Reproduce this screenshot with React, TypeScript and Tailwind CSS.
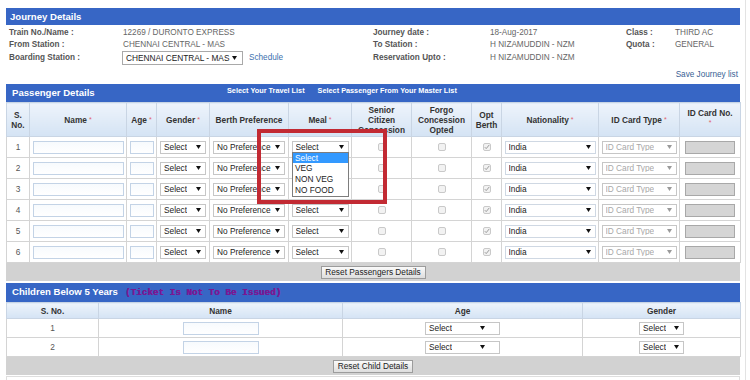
import type { ReactNode } from 'react';

const BLUE = 'bg-[#3766c5]';

function Arrow({ muted }: { muted?: boolean }) {
  return (
    <svg width="5" height="4" viewBox="0 0 5 4" className="shrink-0">
      <path d="M0 0h5L2.5 4z" fill={muted ? '#9a9a9a' : '#111'} />
    </svg>
  );
}

type SelProps = { label: string; className: string; muted?: boolean };

function Sel({ label, className, muted }: SelProps) {
  return (
    <div
      className={`mx-auto flex h-[13px] items-center justify-between border border-[#c6c6c6] bg-white pr-[4px] pl-[3px] text-[8.3px] leading-none ${
        muted ? 'text-[#a8a8a8]' : 'text-[#222]'
      } ${className}`}
    >
      <span className="truncate">{label}</span>
      <Arrow muted={muted} />
    </div>
  );
}

function TextBox({ className }: { className: string }) {
  return (
    <div
      className={`mx-auto h-[13px] border border-[#c3d3e6] bg-linear-to-b from-[#f7fafd] to-white ${className}`}
    />
  );
}

function Check({ checked }: { checked?: boolean }) {
  return (
    <span className="mx-auto flex h-[8px] w-[8px] items-center justify-center rounded-[2px] border border-[#c9c9c9] bg-[#f2f2f2]">
      {checked && (
        <svg width="6" height="6" viewBox="0 0 6 6">
          <path d="M0.8 3.2l1.4 1.4L5.2 1" stroke="#9a9a9a" strokeWidth="1" fill="none" />
        </svg>
      )}
    </span>
  );
}

function Star() {
  return <span className="ml-[2px] align-top text-[7px] font-normal text-[#e0636a]">*</span>;
}

function Th({ children }: { children: ReactNode }) {
  return (
    <th className="border border-[#c9d5e4] bg-linear-to-b from-[#eef4fb] to-[#d4e3f4] px-[1px] text-center align-middle text-[8.3px] leading-[10px] font-bold text-[#333]">
      {children}
    </th>
  );
}

function Td({ children }: { children?: ReactNode }) {
  return <td className="h-[21px] border border-[#d4d4d4] p-0 text-center align-middle">{children}</td>;
}

function ResetButton({ label, className }: { label: string; className: string }) {
  return (
    <div className="flex h-[18px] items-center justify-center bg-[#d2d2d2]">
      <div
        className={`flex h-[13px] items-center justify-center border border-[#9c9c9c] bg-linear-to-b from-[#fafafa] to-[#dedede] text-[8.3px] text-[#222] ${className}`}
      >
        {label}
      </div>
    </div>
  );
}

const passengers = [1, 2, 3, 4, 5, 6];

export default function App() {
  return (
    <div className="relative h-[380px] w-[750px] overflow-hidden bg-white font-['Liberation_Sans',Arial,sans-serif] text-[#555]">
      <div className="ml-[6px] w-[734px] pt-[8px]">
        {/* journey */}
        <div className={`h-[17px] ${BLUE} pl-[4px] text-[9.6px] leading-[17px] font-bold text-white`}>
          Journey Details
        </div>
        <div className="grid grid-cols-[114px_250px_117px_136px_49px_1fr] grid-rows-[12px_12px_14px] items-center pt-[2px] pl-[3px] text-[8.2px]">
          <span className="font-bold text-[#555]">Train No./Name :</span>
          <span className="text-[#666]">12269 / DURONTO EXPRESS</span>
          <span className="font-bold text-[#555]">Journey date :</span>
          <span className="text-[#666]">18-Aug-2017</span>
          <span className="font-bold text-[#555]">Class :</span>
          <span className="text-[#666]">THIRD AC</span>

          <span className="font-bold text-[#555]">From Station :</span>
          <span className="text-[#666]">CHENNAI CENTRAL - MAS</span>
          <span className="font-bold text-[#555]">To Station :</span>
          <span className="text-[#666]">H NIZAMUDDIN - NZM</span>
          <span className="font-bold text-[#555]">Quota :</span>
          <span className="text-[#666]">GENERAL</span>

          <span className="font-bold text-[#555]">Boarding Station :</span>
          <div className="flex items-center">
            <div className="-ml-[1px] flex h-[14px] w-[121px] items-center justify-between border border-[#a9a9a9] bg-white pr-[5px] pl-[3px] text-[8.3px] text-[#222]">
              <span>CHENNAI CENTRAL - MAS</span>
              <Arrow />
            </div>
            <span className="ml-[6px] text-[#3d6fae]">Schedule</span>
          </div>
          <span className="font-bold text-[#555]">Reservation Upto :</span>
          <span className="text-[#666]">H NIZAMUDDIN - NZM</span>
          <span />
          <span />
        </div>
        <div className="mt-[4px] h-[12px] pr-[2px] text-right text-[8.2px] leading-[12px] text-[#3a5f94]">
          Save Journey list
        </div>

        {/* passengers */}
        <div className={`mt-[3px] flex h-[18px] ${BLUE} text-white`}>
          <span className="w-[221px] pl-[6px] text-[9.6px] leading-[18px] font-bold">Passenger Details</span>
          <span className="pt-[2px] text-[7.3px] leading-[9px] font-bold">Select Your Travel List</span>
          <span className="ml-[13px] pt-[2px] text-[7.3px] leading-[9px] font-bold">
            Select Passenger From Your Master List
          </span>
        </div>
        <table className="w-[734px] table-fixed border-collapse">
          <colgroup>
            <col className="w-[23px]" />
            <col className="w-[97px]" />
            <col className="w-[30px]" />
            <col className="w-[53px]" />
            <col className="w-[79px]" />
            <col className="w-[63px]" />
            <col className="w-[60px]" />
            <col className="w-[60px]" />
            <col className="w-[30px]" />
            <col className="w-[97px]" />
            <col className="w-[81px]" />
            <col className="w-[61px]" />
          </colgroup>
          <thead>
            <tr className="h-[34px]">
              <Th>
                S.
                <br />
                No.
              </Th>
              <Th>
                Name<Star />
              </Th>
              <Th>
                Age<Star />
              </Th>
              <Th>
                Gender<Star />
              </Th>
              <Th>Berth Preference</Th>
              <Th>
                Meal<Star />
              </Th>
              <Th>
                Senior
                <br />
                Citizen
                <br />
                Concession
              </Th>
              <Th>
                Forgo
                <br />
                Concession
                <br />
                Opted
              </Th>
              <Th>
                Opt
                <br />
                Berth
              </Th>
              <Th>
                Nationality<Star />
              </Th>
              <Th>
                ID Card Type<Star />
              </Th>
              <th className="border border-[#c9d5e4] bg-linear-to-b from-[#eef4fb] to-[#d4e3f4] pt-[5px] text-center align-top text-[8.3px] leading-[10px] font-bold text-[#333]">
                ID Card No.
                <div className="text-[7px] font-normal text-[#e0636a]">*</div>
              </th>
            </tr>
          </thead>
          <tbody className="text-[8.3px] text-[#555]">
            {passengers.map((n) => (
              <tr key={n}>
                <Td>{n}</Td>
                <Td>
                  <TextBox className="w-[91px]" />
                </Td>
                <Td>
                  <TextBox className="w-[24px]" />
                </Td>
                <Td>
                  <Sel label="Select" className="w-[46px]" />
                </Td>
                <Td>
                  <Sel label="No Preference" className="w-[72px]" />
                </Td>
                <Td>
                  {/* rows 2 and 3 sit under the open list */}
                  {n === 2 || n === 3 ? null : <Sel label="Select" className="w-[57px]" />}
                </Td>
                <Td>
                  <Check />
                </Td>
                <Td>
                  <Check />
                </Td>
                <Td>
                  <Check checked />
                </Td>
                <Td>
                  <Sel label="India" className="w-[91px] border-[#cfd8e3]" />
                </Td>
                <Td>
                  <Sel label="ID Card Type" muted className="w-[75px]" />
                </Td>
                <Td>
                  <div className="mx-auto h-[13px] w-[50px] border border-[#a8a8a8] bg-[#d5d5d5]" />
                </Td>
              </tr>
            ))}
          </tbody>
        </table>
        <ResetButton label="Reset Passengers Details" className="w-[105px]" />

        {/* children */}
        <div className={`mt-[2px] flex h-[19px] items-center ${BLUE} pl-[6px]`}>
          <span className="text-[9.6px] font-bold text-white">Children Below 5 Years</span>
          <span className="ml-[7px] font-['Liberation_Mono','Courier_New',monospace] text-[9.3px] font-bold text-[#7a1893] [text-shadow:0.4px_0_0_#7a1893]">
            (Ticket Is Not To Be Issued)
          </span>
        </div>
        <table className="w-[734px] table-fixed border-collapse">
          <colgroup>
            <col className="w-[92px]" />
            <col className="w-[244px]" />
            <col className="w-[240px]" />
            <col className="w-[158px]" />
          </colgroup>
          <thead>
            <tr className="h-[16px]">
              <Th>S. No.</Th>
              <Th>Name</Th>
              <Th>Age</Th>
              <Th>Gender</Th>
            </tr>
          </thead>
          <tbody className="text-[8.3px] text-[#555]">
            {[1, 2].map((n) => (
              <tr key={n} className="h-[19px]">
                <td className="border border-[#d4d4d4] p-0 text-center">{n}</td>
                <td className="border border-[#d4d4d4] p-0">
                  <TextBox className="w-[76px]" />
                </td>
                <td className="border border-[#d4d4d4] p-0">
                  <Sel label="Select" className="w-[75px] pr-[14px]" />
                </td>
                <td className="border border-[#d4d4d4] p-0">
                  <Sel label="Select" className="w-[45px]" />
                </td>
              </tr>
            ))}
          </tbody>
        </table>
        <ResetButton label="Reset Child Details" className="w-[80px]" />
        <div className="mt-[1px] h-[10px] border border-[#dedede]" />
      </div>

      {/* page edge */}
      <div className="absolute top-0 left-[745px] h-full w-px bg-[#e3e3e3]" />

      {/* open meal list */}
      <div className="absolute top-[152px] left-[292px] w-[57px] border border-[#7d7d7d] bg-white text-[8.3px] leading-none text-[#222]">
        <div className="flex h-[10px] items-center bg-[#3399ff] pl-[2px] text-white">Select</div>
        <div className="flex h-[11px] items-center pl-[2px]">VEG</div>
        <div className="flex h-[11px] items-center pl-[2px]">NON VEG</div>
        <div className="flex h-[11px] items-center pl-[2px]">NO FOOD</div>
      </div>

      {/* highlight */}
      <div className="absolute top-[129px] left-[257px] h-[75px] w-[130px] border-[4px] border-[#c22a33]" />
    </div>
  );
}
